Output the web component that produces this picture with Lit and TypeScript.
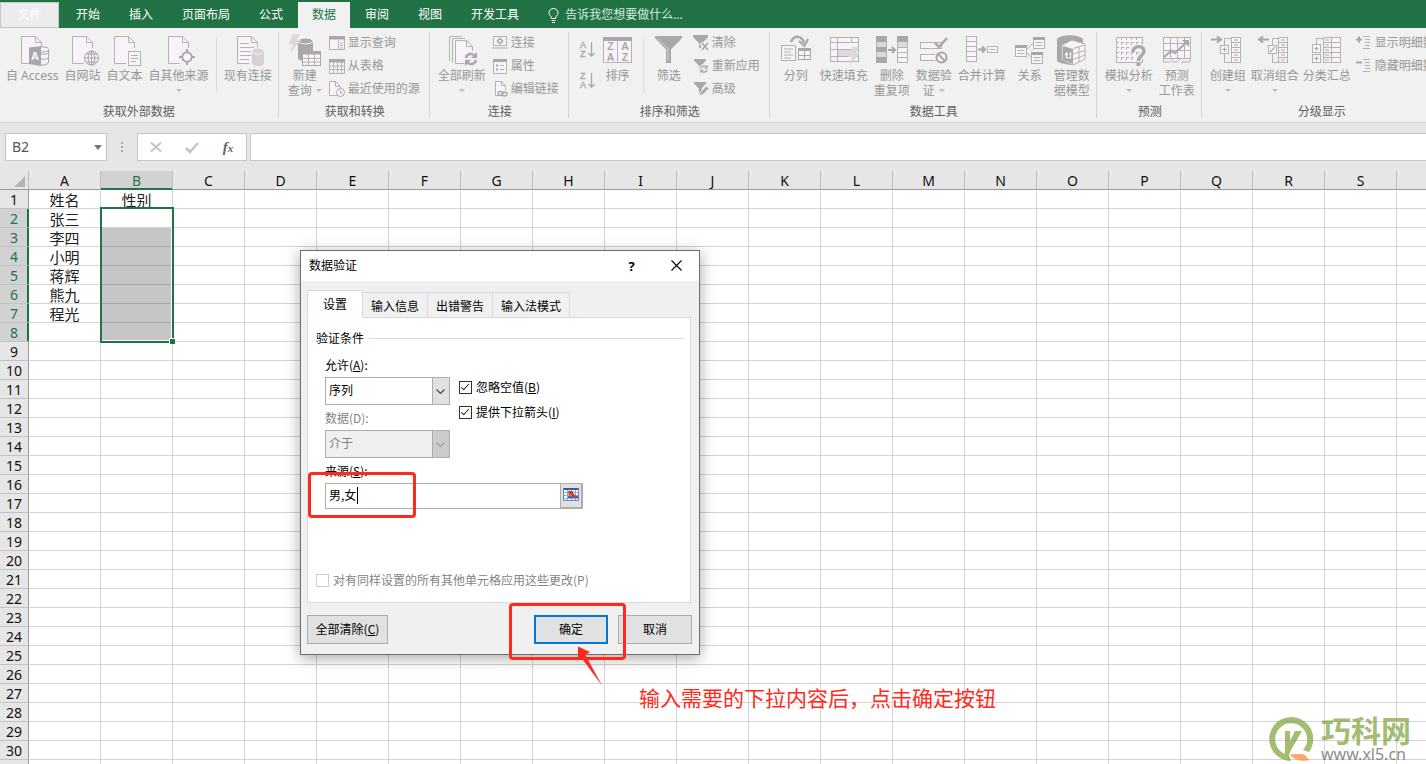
import { LitElement, html, svg, css, nothing, TemplateResult, SVGTemplateResult } from "lit";
import { customElement } from "lit/decorators.js";
import { classMap } from "lit/directives/class-map.js";

const UI_FONT = css`"Noto Sans CJK SC", sans-serif`;

/* ---------- ribbon glyphs ---------- */

const line = "#b5b1b5";
const dark = "#a9a7a9";
const pale = "#f7f3f8";
const mid = "#dcd8dc";

const doc = svg`<path d="M25.5 13V7.5L19.5 1.5H5.5V28.5H17" fill=${pale} stroke=${line}/><path d="M19.5 1.5V7.5H25.5" fill="none" stroke=${line}/>`;
const bolt = (x: number, y: number) =>
  svg`<path transform="translate(${x} ${y})" d="M4 0H11L8 6H12L1 19L4 10H0Z" fill=${mid}/>`;
const cylinder = (x: number, y: number, w: number, h: number, fill: string) =>
  svg`<path d="M${x} ${y + 3}V${y + h - 3}C${x} ${y + h + 1} ${x + w} ${y + h + 1} ${x + w} ${y + h - 3}V${y + 3}Z" fill=${fill}/>
  <ellipse cx=${x + w / 2} cy=${y + 3} rx=${w / 2} ry="3" fill=${fill} stroke=${pale}/>`;
const swirl = (x: number, y: number, s: number) =>
  svg`<g transform="translate(${x} ${y}) scale(${s})"><circle r="8" fill="#f1f1f1"/>
  <path d="M-5 -1A5 5 0 0 1 4 -3M5 1A5 5 0 0 1 -4 3" fill="none" stroke=${dark} stroke-width="2.4"/>
  <path d="M6 -7V-1H0ZM-6 7V1H0Z" fill=${dark}/></g>`;
const plusBox = (x: number, y: number, slash = false) =>
  svg`<rect x=${x} y=${y} width="8" height="8" fill=${pale} stroke=${line}/>
  <path d=${slash ? `M${x + 1.5} ${y + 6.5}l5 -5` : `M${x + 2} ${y + 4}h4M${x + 4} ${y + 2}v4`} stroke=${dark} stroke-width="1.2"/>`;
const miniCard = (x: number, y: number) =>
  svg`<rect x=${x} y=${y} width="11" height="11" fill=${pale} stroke=${line}/><path d="M${x - 0.5} ${y + 1}h12" stroke=${dark} stroke-width="3"/>
  <path d="M${x + 2} ${y + 5}h7M${x + 2} ${y + 8}h7" stroke=${line}/>`;
const funnel = svg`<path d="M0 0H15V2L9.500 8V15L6 13V8L0 2Z" fill=${dark}/>`;
const outlineTable = svg`<rect x="19.500" y="2.500" width="9" height="25" fill=${pale} stroke=${line}/>
  <path d="M19.500 7.500h9M19.500 12.500h9M19.500 17.500h9M19.500 22.500h9" stroke=${line}/>
  <path d="M22 5h4M22 10h4M22 15h4M22 20h4M22 25h4" stroke=${dark}/>`;

const glyphs: Record<string, SVGTemplateResult> = {
  access: svg`${doc}${cylinder(19, 12, 13, 18, pale)}
    <path d="M20 14.500a6 2.500 0 0 0 12.500 0M22 13q5 -3 10 0M32.500 14V28q-3 3 -8 2M25 19q5 1 7 -1M25 24q5 1 7 -1" fill="none" stroke=${dark}/>
    <path d="M13 12.500L25 11V31L13 29Z" fill=${dark}/><text x="15" y="25" font-size="11" font-weight="bold" fill="#fff">A</text>`,
  web: svg`${doc}<circle cx="24.500" cy="23" r="7" fill=${pale} stroke=${dark}/><ellipse cx="24.500" cy="23" rx="3.300" ry="7" fill="none" stroke=${dark}/>
    <path d="M24.500 16V30M17.500 23H31.500M19 19H30M19 27H30" stroke=${dark}/>`,
  text: svg`${doc}<rect x="19.500" y="16.500" width="12" height="14" fill=${pale} stroke=${line}/><path d="M22 20.500h7M22 23.500h7M22 26.500h5" stroke=${line}/>`,
  other: svg`${doc}<circle cx="24" cy="22" r="8" fill="#f1f1f1"/><circle cx="24" cy="22" r="4.700" fill=${pale} stroke=${dark} stroke-width="2"/>
    <path d="M24 14v4M24 26v4M16 22h4M28 22h4" stroke=${dark} stroke-width="2"/>`,
  existing: svg`${doc}<path d="M8 8.500h9M8 12.500h14M8 16.500h11M8 20.500h11M8 24.500h9" stroke=${line}/>${cylinder(20, 13, 12, 18, "#d5d1d5")}`,
  newquery: svg`${cylinder(9, 3, 15, 23, dark)}${bolt(0, -1)}<rect x="13.500" y="16.500" width="18" height="14" fill=${pale} stroke=${dark}/>
    <path d="M13 18h19" stroke=${dark} stroke-width="3"/><path d="M19.500 19v11M25.500 19v11M14 23.500h18M14 27h18" stroke=${line}/>`,
  refresh: svg`<path d="M3.500 26V1.500H16M6.500 28V3.500H19" fill="none" stroke=${line}/><path d="M26.500 16V11.500L20.500 5.500H9.500V28.500H19" fill=${pale} stroke=${line}/>
    <path d="M20.500 5.500V11.500H26.500" fill="none" stroke=${line}/>${swirl(25, 24, 1)}`,
  sort: svg`<rect x="1.500" y="2.500" width="28" height="25" fill=${pale} stroke=${line}/><path d="M1 4h29" stroke=${dark} stroke-width="4"/><path d="M15.500 5v22" stroke=${line}/>
    <g font-size="10.500" font-weight="bold" fill=${dark} text-anchor="middle"><text x="8.500" y="15">Z</text><text x="8.500" y="25.500">A</text><text x="23" y="15">A</text><text x="23" y="25.500">Z</text></g>`,
  filter: svg`<path d="M2 1H29V3L18 14.500V28H13V14.500L2 3Z" fill=${dark}/><path d="M5 3.500L15 14V26" fill="none" stroke="#d8d4d8"/>`,
  columns: svg`<path d="M11 7C14 0 22 0 24 8" fill="none" stroke=${dark} stroke-width="2.500"/><path d="M19 6L24.500 11L28 4" fill="none" stroke=${dark} stroke-width="2.200"/>
    <rect x="1.500" y="10.500" width="14" height="15" fill=${pale} stroke=${line}/><path d="M4 14h9M4 17h7M4 20h9M4 23h7" stroke=${line}/>
    <rect x="18.500" y="13.500" width="12" height="11" fill=${pale} stroke=${dark}/><path d="M18 14.500h13" stroke=${dark} stroke-width="3"/><path d="M24.500 16v8M19 20.500h12" stroke=${dark}/>`,
  flash: svg`<rect x="2.500" y="2.500" width="28" height="24" fill=${pale} stroke=${line}/><path d="M2 7.500h28M2 14.500h28M2 21.500h28M9.500 2v24M23.500 2v5" stroke=${line}/>
    <rect x="10" y="15" width="14" height="6" fill=${mid}/>${bolt(20, 12)}`,
  dedupe: svg`<rect x=".5" y="1.500" width="10" height="26" fill=${mid} stroke=${line}/><rect y="1" width="11" height="6" fill=${dark}/><rect y="12" width="11" height="5" fill=${dark}/><rect y="22" width="11" height="6" fill=${dark}/>
    <path d="M12 15h6M16 12l3 3l-3 3" fill="none" stroke=${dark} stroke-width="2"/>
    <rect x="21.500" y="1.500" width="10" height="26" fill=${pale} stroke=${line}/><rect x="21" y="1" width="11" height="6" fill=${dark}/><rect x="22" y="7" width="9" height="5" fill=${mid}/><path d="M21 12.500h11M21 17.500h11M21 22.500h11" stroke=${line}/>`,
  validate: svg`<rect x="2.500" y="7.500" width="21" height="6" fill=${pale} stroke=${line}/><rect x="2.500" y="19.500" width="16" height="6" fill=${pale} stroke=${line}/>
    <path d="M17 8l4 4L29 3" fill="none" stroke=${dark} stroke-width="2.500"/><circle cx="23.500" cy="22.500" r="7" fill="#f1f1f1"/><circle cx="23.500" cy="22.500" r="5" fill=${pale} stroke=${dark} stroke-width="2"/><path d="M20 19l7 7" stroke=${dark} stroke-width="2"/>`,
  consolidate: svg`<rect x=".5" y="1.500" width="10" height="25" fill=${pale} stroke=${line}/><path d="M0 6.500h11M0 11.500h11M0 16.500h11M0 21.500h11" stroke=${line}/>
    <path d="M12 14.500h7M16 11.500l3 3l-3 3" fill="none" stroke=${dark} stroke-width="2"/><rect x="21.500" y="11.500" width="10" height="6" fill=${pale} stroke=${line}/><path d="M24 14.500h5" stroke=${line}/>`,
  relation: svg`<path d="M12 15L19 8M12 17L18 23" stroke=${line}/>${miniCard(1.5, 10.5)}${miniCard(19.5, 2.5)}${miniCard(17.5, 17.5)}`,
  model: svg`<path d="M1 4C5 -1 22 -1 27 4V9L16 10L15 30C8 29 3 28 1 26Z" fill=${dark}/><path d="M6 10L16 5L29 9V24L17 30L6 25Z" fill=${pale} stroke=${line}/>
    <path d="M7 11l10 3v15l-10 -4Z" fill=${dark}/><path d="M17 13.500L29 10M17 19L29 15.500M17 24.500L29 20M23 12v15" stroke=${line}/><path d="M10.500 23V19M9 20l1.500 -2l1.500 2M14.500 17v6h-2M10.500 23h2" fill="none" stroke="#fff" stroke-width="1.200"/>`,
  whatif: svg`<rect x="3.500" y="2.500" width="26" height="25" fill=${pale} stroke=${line}/><path d="M8.500 2v25M13.500 2v25M18.500 2v25M23.500 2v25M3 7.500h26M3 12.500h26M3 17.500h26M3 22.500h26" stroke=${line} stroke-dasharray="3 2"/>
    <path d="M20 17C20 10 31 10 31 16C31 21 25.500 20 25.500 26" fill="none" stroke="#f1f1f1" stroke-width="6"/><path d="M20 17C20 10 31 10 31 16C31 21 25.500 20 25.500 26" fill="none" stroke=${dark} stroke-width="3.400"/><rect x="23.500" y="28" width="4" height="3" fill=${dark}/>`,
  forecast: svg`<rect x="2.500" y="2.500" width="27" height="21" fill=${pale} stroke=${line}/><path d="M9.500 2v21M16.500 2v21M23.500 2v21M2 8.500h27M2 15.500h27" stroke=${line}/>
    <path d="M3 22L10 16L14 18L27 6" fill="none" stroke=${dark} stroke-width="2"/><path d="M21 5H28V12Z" fill=${dark}/><path d="M2.500 23v4h6l3 -3M11 27h5l3 -3M20 27h9v-3" fill="none" stroke=${line}/>`,
  group: svg`<path d="M-1 4.500h9M5 1.500l4 3l-4 3" fill="none" stroke=${dark} stroke-width="2"/><path d="M19 3.500H12.500V10M12.500 19V27.500H19" fill="none" stroke=${line}/>${plusBox(8.500, 10.500)}${outlineTable}`,
  ungroup: svg`<path d="M0 4.500h10M4 1.500l-4 3l4 3" fill="none" stroke=${dark} stroke-width="2"/><path d="M19 3.500H13.500V10M13.500 19V27.500H19" fill="none" stroke=${line}/>${plusBox(9.500, 10.500, true)}${outlineTable}`,
  subtotal: svg`<path d="M12 3.500H5.500V9" fill="none" stroke=${line}/>${plusBox(1.5, 9.500)}${plusBox(1.5, 19.500)}
    <rect x="12.500" y="2.500" width="17" height="25" fill=${pale} stroke=${line}/><path d="M12 7.500h18M12 12.500h18M12 17.500h18M12 22.500h18M20.500 2v25" stroke=${line}/><path d="M14 5h4M14 10h4M14 15h4M14 20h4M14 25h4" stroke=${dark}/>`,
  /* 16 px glyphs */
  show: svg`<rect x=".5" y="1.500" width="15" height="13" fill=${pale} stroke=${line}/><path d="M0 3h16" stroke=${dark} stroke-width="3"/><path d="M9.500 5v9M11 8h3M11 10.500h3M11 13h3" stroke=${line}/>`,
  table: svg`<rect x=".5" y="1.500" width="15" height="14" fill=${pale} stroke=${line}/><path d="M0 3h16" stroke=${dark} stroke-width="3"/><path d="M4.500 4v11M8.500 4v11M12.500 4v11M1 8h14M1 11.500h14" stroke=${line}/>`,
  recent: svg`<path d="M8 14.500H.5V.5H6.500L11.500 5.500V8" fill=${pale} stroke=${line}/><path d="M6.500 1V5.500H11" fill="none" stroke=${line}/><circle cx="11.500" cy="11.500" r="4" fill=${pale} stroke=${dark}/><path d="M11.500 9v3h2" fill="none" stroke=${dark}/>`,
  link: svg`<rect x="1.500" y="1.500" width="13" height="9" fill=${pale} stroke=${line}/><circle cx="8" cy="6" r="2" fill="none" stroke=${dark} stroke-width="1.400"/><path d="M8 2.500v2M8 7.500v2M4.500 6h2M9.500 6h2M0 13h16" stroke=${dark}/>`,
  props: svg`<rect x="1.500" y="1.500" width="13" height="14" fill=${pale} stroke=${line}/><path d="M1 2.500h14" stroke=${dark} stroke-width="3"/><path d="M4 7.500h2M4 11.500h2" stroke=${dark} stroke-width="2"/><path d="M8 7.500h4M8 11.500h4" stroke=${line}/>`,
  editlink: svg`<path d="M7 14.500H3.500V.5H9.500L13.500 4.500V9" fill=${pale} stroke=${line}/><path d="M9.500 1V4.500H13" fill="none" stroke=${line}/><ellipse cx="8.500" cy="12.500" rx="2.500" ry="2" fill="none" stroke=${dark} stroke-width="1.300"/><ellipse cx="12.500" cy="13" rx="2.500" ry="2" fill="none" stroke=${dark} stroke-width="1.300"/>`,
  clear: svg`${funnel}<path d="M8 8l7 7M15 8l-7 7" stroke="#f1f1f1" stroke-width="4"/><path d="M9 8l6 7M15 8l-6 7" stroke=${dark} stroke-width="1.600"/>`,
  reapply: svg`<g transform="translate(1 1) scale(.8)">${funnel}</g>${swirl(11, 11, 0.62)}`,
  advanced: svg`<g transform="translate(1 1) scale(.8)">${funnel}</g><path d="M6 15l1.500 -4l6 -6l2.500 2.500l-6 6Z" fill=${dark} stroke="#f1f1f1"/>`,
  detailplus: svg`<path d="M0 4.500h6M3 1.500v6" stroke=${dark} stroke-width="2"/><path d="M7 1.500h7M9 4.500h5M9 7.500h5M9 10.500h5M7 13.500h7" stroke=${line}/>`,
  detailminus: svg`<path d="M0 4.500h6" stroke=${dark} stroke-width="2"/><path d="M7 1.500h7M9 4.500h5M9 7.500h5M9 10.500h5M7 13.500h7" stroke=${line}/>`,
  az: svg`<g font-size="9" fill=${dark} stroke=${dark} stroke-width=".3"><text x="0" y="7">A</text><text x="0" y="16">Z</text></g><path d="M11.500 1v14M8.500 12l3 3l3 -3" fill="none" stroke=${dark} stroke-width="1.300"/>`,
  za: svg`<g font-size="9" fill=${dark} stroke=${dark} stroke-width=".3"><text x="0" y="7">Z</text><text x="0" y="16">A</text></g><path d="M11.500 1v14M8.500 12l3 3l3 -3" fill="none" stroke=${dark} stroke-width="1.300"/>`,
};

@customElement("ribbon-bar")
class RibbonBar extends LitElement {
  static styles = css`
    :host { display: block; flex: none; font: 12px/16px "Noto Sans", ${UI_FONT}; }
    .tabs { display: flex; align-items: stretch; gap: 1px; height: 26px; padding-top: 2px; background: #217346; color: #fff; overflow: hidden; }
    button { font: inherit; color: inherit; background: none; border: 0; padding: 0; margin: 0; white-space: nowrap; }
    .tab { padding: 0 14px; }
    .file { width: 59px; margin-right: 2px; background: #ececec; border: 1px solid #c8c8c8; color: #fff; }
    .tab.on { background: #f1f1f1; color: #217346; }
    .tell { display: flex; align-items: center; gap: 6px; padding: 0 14px; color: #d9e9df; }
    .tools { display: flex; height: 94px; overflow: hidden; background: #f1f1f1; border-bottom: 1px solid #d2d2d2; color: #979797; }
    .group { display: flex; flex-direction: column; flex: none; position: relative; padding: 3px 4px 0 3px; }
    .group + .group { padding-left: 5px; }
    .group::after { content: ""; position: absolute; right: 0; top: 4px; height: 86px; border-right: 1px solid #d4d4d4; }
    .items { display: flex; height: 73px; }
    .name { text-align: center; line-height: 16px; color: #606060; }
    .outline .name { padding-right: 16px; }
    .outline .big { padding: 4px 2px 0; }
    .big { display: flex; flex-direction: column; align-items: center; padding: 4px 3px 0; min-width: 42px; line-height: 15px; }
    .big svg { margin-bottom: 1px; overflow: visible; }
    .big .sub { display: flex; align-items: center; gap: 4px; height: 15px; }
    .caret { width: 0; border: 3px solid transparent; border-top-color: #bcbcbc; border-bottom: 0; }
    .col { display: flex; flex-direction: column; padding: 0 6px 0 3px; }
    .small { display: flex; align-items: center; gap: 3px; height: 23px; }
    .small svg { overflow: visible; }
    .sorts { display: flex; flex-direction: column; gap: 14px; padding: 10px 3px 0 6px; }
    .sorts svg { display: block; overflow: visible; }
    .rule { border-left: 1px solid #dcdcdc; margin: 7px 4px 11px; }
    svg text { font-family: "Liberation Sans", sans-serif; }
  `;

  big(icon: string, label: string, sub = "", drop = false): TemplateResult {
    return html`<button class="big">
      <svg width="32" height="32" viewBox="0 0 32 32">${glyphs[icon]}</svg>
      <span>${label}</span>
      ${sub || drop ? html`<span class="sub">${sub}${drop ? html`<i class="caret"></i>` : nothing}</span>` : nothing}
    </button>`;
  }
  small(icon: string, label: string): TemplateResult {
    return html`<button class="small"><svg width="16" height="16" viewBox="0 0 16 16">${glyphs[icon]}</svg>${label}</button>`;
  }
  group(name: string, items: TemplateResult, outline = false): TemplateResult {
    return html`<section class=${classMap({ group: true, outline })}><div class="items">${items}</div><div class="name">${name}</div></section>`;
  }

  render() {
    const tabs = ["开始", "插入", "页面布局", "公式", "数据", "审阅", "视图", "开发工具"];
    return html`
      <nav class="tabs">
        <button class="file">文件</button>
        ${tabs.map((t) => html`<button class=${classMap({ tab: true, on: t === "数据" })}>${t}</button>`)}
        <button class="tell">
          <svg width="11" height="15" viewBox="0 0 11 15" fill="none" stroke="#fff"><path d="M3.500 10.500C3.500 8 1 7.500 1 4.800A4.500 4.300 0 0 1 10 4.800C10 7.500 7.500 8 7.500 10.500ZM3.500 12.500H7.500M4 14.500H7"/></svg>告诉我您想要做什么...
        </button>
      </nav>
      <div class="tools">
        ${this.group("获取外部数据", html`${this.big("access", "自 Access")}${this.big("web", "自网站")}${this.big("text", "自文本")}${this.big("other", "自其他来源", "", true)}<div class="rule"></div>${this.big("existing", "现有连接")}`)}
        ${this.group("获取和转换", html`${this.big("newquery", "新建", "查询", true)}<div class="col">${this.small("show", "显示查询")}${this.small("table", "从表格")}${this.small("recent", "最近使用的源")}</div>`)}
        ${this.group("连接", html`${this.big("refresh", "全部刷新", "", true)}<div class="col">${this.small("link", "连接")}${this.small("props", "属性")}${this.small("editlink", "编辑链接")}</div>`)}
        ${this.group("排序和筛选", html`<div class="sorts">
            <button aria-label="升序"><svg width="14" height="17">${glyphs.az}</svg></button>
            <button aria-label="降序"><svg width="14" height="17">${glyphs.za}</svg></button>
          </div>${this.big("sort", "排序")}<div class="rule"></div>${this.big("filter", "筛选")}<div class="col">${this.small("clear", "清除")}${this.small("reapply", "重新应用")}${this.small("advanced", "高级")}</div>`)}
        ${this.group("数据工具", html`${this.big("columns", "分列")}${this.big("flash", "快速填充")}${this.big("dedupe", "删除", "重复项")}${this.big("validate", "数据验", "证", true)}${this.big("consolidate", "合并计算")}${this.big("relation", "关系")}${this.big("model", "管理数", "据模型")}`)}
        ${this.group("预测", html`${this.big("whatif", "模拟分析", "", true)}${this.big("forecast", "预测", "工作表")}`)}
        ${this.group("分级显示", html`${this.big("group", "创建组", "", true)}${this.big("ungroup", "取消组合", "", true)}${this.big("subtotal", "分类汇总")}<div class="col">${this.small("detailplus", "显示明细数据")}${this.small("detailminus", "隐藏明细数据")}</div>`, true)}
      </div>`;
  }
}

@customElement("formula-bar")
class FormulaBar extends LitElement {
  static styles = css`
    :host { display: flex; flex: none; align-items: flex-start; height: 38px; padding: 10px 0 0 5px; background: #e6e6e6; font: 14px "Noto Sans", sans-serif; }
    .cell { display: flex; align-items: center; box-sizing: border-box; width: 102px; height: 28px; padding: 0 4px 0 6px; background: #fff; border: 1px solid #c6c6c6; }
    input { border: 0; padding: 0 0 2px; min-width: 0; flex: 1; font: inherit; color: #555; background: #fff; outline: 0; }
    .arrow { border: 4px solid transparent; border-top: 5px solid #777; border-bottom: 0; }
    .dots { width: 30px; height: 28px; }
    .box { display: flex; align-items: center; justify-content: space-around; box-sizing: border-box; width: 110px; height: 28px; background: #fff; border: 1px solid #c6c6c6; }
    button { border: 0; background: none; padding: 0; height: 20px; width: 20px; }
    .fx { font: italic bold 15px/20px "Liberation Serif", serif; color: #666; }
    .fx small { font-size: 11px; }
    .formula { box-sizing: border-box; height: 28px; margin-left: 3px; border: 1px solid #c6c6c6; border-right: 0; }
  `;
  render() {
    return html`
      <div class="cell"><input aria-label="名称框" .value=${"B2"} /><i class="arrow"></i></div>
      <svg class="dots" viewBox="0 0 30 28"><path d="M14 9h2v2h-2zM14 13h2v2h-2zM14 17h2v2h-2z" fill="#aaa"/></svg>
      <div class="box">
        <button aria-label="取消"><svg width="20" height="20"><path d="M5 5.500l10 9M15 5.500l-10 9" stroke="#c4c4c4" stroke-width="2"/></svg></button>
        <button aria-label="输入"><svg width="20" height="20"><path d="M4 11l4 4l8 -9" fill="none" stroke="#c4c4c4" stroke-width="2.500"/></svg></button>
        <button class="fx" aria-label="插入函数">f<small>x</small></button>
      </div>
      <input class="formula" aria-label="编辑栏" />`;
  }
}

@customElement("sheet-grid")
class SheetGrid extends LitElement {
  static styles = css`
    :host { display: block; flex: 1; min-height: 0; position: relative; overflow: hidden; background: #fff; }
    table { table-layout: fixed; width: 1541px; border-collapse: separate; border-spacing: 0; font: 15px/16px ${UI_FONT}; color: #222; }
    .rows { width: 29px; }
    th, td { box-sizing: border-box; height: 19px; padding: 2px 0 0; text-align: center; border-right: 1px solid #d4d4d4; border-bottom: 1px solid #d4d4d4; }
    th { font: 14px/16px "Noto Sans", sans-serif; background: #e6e6e6; color: #111; }
    thead th { border-right-color: #bdbdbd; border-bottom-color: #9b9b9b; }
    tbody th { border-right-color: #9b9b9b; border-bottom-color: #c3c3c3; }
    th.on { background: #d2d2d2; color: #217346; }
    thead th.on { box-shadow: inset 0 -1px #217346; border-bottom-color: #217346; }
    tbody th.on { box-shadow: inset -1px 0 #217346; border-right-color: #217346; }
    td.fill { background: #c6c6c6; border-bottom-color: #a8a8a8; }
    .corner svg { display: block; margin-left: 14px; }
    .sel { position: absolute; left: 100px; top: 36px; box-sizing: border-box; width: 74px; height: 136px; border: 2px solid #217346; box-shadow: inset -1px -1px #fff; }
    .sel::after { content: ""; position: absolute; right: -3px; bottom: -3px; width: 5px; height: 5px; background: #217346; border: 1px solid #fff; border-right: 0; border-bottom: 0; }
  `;
  render() {
    const cols = [..."ABCDEFGHIJKLMNOPQRSTU"];
    const names = ["姓名", "张三", "李四", "小明", "蒋辉", "熊九", "程光"];
    return html`
      <table>
        <colgroup><col class="rows" />${cols.map(() => html`<col />`)}</colgroup>
        <thead><tr>
          <th class="corner"><svg width="11" height="11"><path d="M11 0V11H0Z" fill="#b4b4b4"/></svg></th>
          ${cols.map((c, i) => html`<th class=${classMap({ on: c === "B" })}>${i < 19 ? c : nothing}</th>`)}
        </tr></thead>
        <tbody>
          ${Array.from({ length: 31 }, (_, i) => html`<tr>
            <th class=${classMap({ on: i > 0 && i < 8 })}>${i < 30 ? i + 1 : nothing}</th>
            ${cols.map((c) => html`<td class=${classMap({ fill: c === "B" && i > 1 && i < 8 })}>${c === "A" ? names[i] ?? "" : c === "B" && i === 0 ? "性别" : ""}</td>`)}
          </tr>`)}
        </tbody>
      </table>
      <div class="sel"></div>`;
  }
}

@customElement("validation-dialog")
class ValidationDialog extends LitElement {
  static styles = css`
    :host { display: block; box-sizing: border-box; width: 400px; border: 1px solid #6e6e6e; background: #f0f0f0; box-shadow: 0 3px 14px rgba(0, 0, 0, .35); font: 12px/16px ${UI_FONT}; color: #000; }
    button, input, select { font: inherit; color: inherit; margin: 0; box-sizing: border-box; }
    .title { display: flex; align-items: center; height: 30px; padding-left: 8px; background: #fff; }
    .title span { flex: 1; padding-bottom: 2px; }
    .title button { width: 45px; height: 30px; padding: 0 0 1px; border: 0; background: none; font: bold 13px "Noto Sans", sans-serif; }
    .body { padding: 9px 7px 10px 6px; }
    .tabs { display: flex; align-items: flex-end; position: relative; }
    .tabs button { height: 26px; padding: 1px 8px 0; background: #f0f0f0; border: 1px solid #d9d9d9; border-left: 0; }
    .tabs .on { height: 28px; width: 56px; padding: 0 8px; background: #fff; border: 1px solid #d9d9d9; border-bottom-color: #fff; }
    .panel { margin: -1px 1px 0 0; padding: 10px 6px 14px 8px; background: #fff; border: 1px solid #d9d9d9; }
    .head { display: flex; align-items: center; gap: 5px; height: 20px; }
    .head::after { content: ""; flex: 1; border-top: 1px solid #d9d9d9; }
    .form { display: grid; grid-template-columns: 125px 1fr; column-gap: 9px; padding: 9px 0 0 9px; }
    .field { display: flex; flex-direction: column; gap: 5px; margin-bottom: 5px; }
    .field label { line-height: 15px; }
    .pick { position: relative; height: 28px; }
    select { appearance: none; width: 100%; height: 28px; padding: 0 3px 2px; border: 1px solid #adadad; border-radius: 0; background: #fff; opacity: 1; }
    .pick svg { position: absolute; right: 1px; top: 1px; background: #e1e1e1; border-left: 1px solid #adadad; pointer-events: none; }
    .off { color: #838383; }
    .off select { background: #f0f0f0; }
    .off svg { background: #ccc; }
    .checks { display: flex; flex-direction: column; gap: 9px; padding-top: 22px; }
    .check { display: flex; align-items: center; gap: 4px; height: 16px; }
    .check input { appearance: none; position: relative; width: 13px; height: 13px; border: 1px solid #333; background: #fff; }
    .check input:checked::after { content: ""; position: absolute; left: 3px; top: 0; width: 3px; height: 7px; border: solid #222; border-width: 0 1px 1px 0; transform: rotate(42deg); }
    .check input:disabled { border-color: #ccc; }
    .source { grid-column: 1 / 3; width: 258px; }
    .ref { display: flex; position: relative; height: 26px; border: 1px solid #adadad; box-sizing: border-box; }
    .ref input { flex: 1; min-width: 0; padding: 0 3px 2px; border: 0; outline: 0; }
    .ref button { width: 22px; padding: 0; border: 1px solid #adadad; border-width: 0 1px 1px 1px; background: #e1e1e1; line-height: 0; }
    .cursor { position: absolute; left: 31px; top: 3px; height: 17px; border-left: 1px solid #000; }
    .same { margin-top: 58px; }
    .foot { display: flex; gap: 10px; padding-top: 12px; }
    .foot button { height: 29px; width: 74px; padding: 0 0 1px; background: #e1e1e1; border: 1px solid #adadad; }
    .foot .reset { width: 81px; margin-right: auto; }
    .foot .ok { border: 2px solid #0078d7; }
  `;
  chevron(color: string) {
    return html`<svg width="16" height="26" viewBox="0 0 16 26"><path d="M3.500 11.500l4 4l4 -4" fill="none" stroke=${color} stroke-width="1.200"/></svg>`;
  }
  render() {
    return html`
      <div class="title"><span>数据验证</span><button aria-label="帮助">?</button>
        <button aria-label="关闭"><svg width="11" height="11"><path d="M.5 .5l10 10M10.500 .5l-10 10" stroke="#000" stroke-width="1.100"/></svg></button></div>
      <div class="body">
        <div class="tabs"><button class="on">设置</button><button>输入信息</button><button>出错警告</button><button>输入法模式</button></div>
        <div class="panel">
          <div class="head">验证条件</div>
          <div class="form">
            <div>
              <div class="field"><label for="allow">允许(<u>A</u>):</label><div class="pick"><select id="allow"><option>序列</option></select>${this.chevron("#444")}</div></div>
              <div class="field off"><label for="data">数据(D):</label><div class="pick"><select id="data" disabled><option>介于</option></select>${this.chevron("#a0a0a0")}</div></div>
            </div>
            <div class="checks">
              <label class="check"><input type="checkbox" checked /><span>忽略空值(<u>B</u>)</span></label>
              <label class="check"><input type="checkbox" checked /><span>提供下拉箭头(<u>I</u>)</span></label>
            </div>
            <div class="field source"><label for="source">来源(<u>S</u>):</label>
              <div class="ref"><input id="source" .value=${"男,女"} /><i class="cursor"></i>
                <button aria-label="选择区域"><svg width="16" height="18" viewBox="0 0 16 18"><rect x=".5" y="1.500" width="15" height="12" fill="#fff" stroke="#6a86bd"/><path d="M1 2h14" stroke="#35599e" stroke-width="2"/><path d="M1 5.500h14M1 8.500h14M1 11.500h14M4.500 3v10M8.500 3v10M12.500 3v10" stroke="#8ea7d6"/><rect x="5" y="9" width="10" height="2" fill="#4169b2"/><path d="M5 4H11L9.500 5.500L13 9L11 11L7.500 7.500L6 9Z" fill="#d3392b"/></svg></button>
              </div></div>
          </div>
          <label class="check off same"><input type="checkbox" disabled /><span>对有同样设置的所有其他单元格应用这些更改(P)</span></label>
        </div>
        <div class="foot"><button class="reset">全部清除(<u>C</u>)</button><button class="ok">确定</button><button>取消</button></div>
      </div>`;
  }
}

@customElement("app-root")
class AppRoot extends LitElement {
  static styles = css`
    :host { display: flex; flex-direction: column; position: relative; height: 100vh; overflow: hidden; background: #fff; }
    validation-dialog { position: absolute; left: 300px; top: 250px; }
    .mark { position: absolute; box-sizing: border-box; border: 3px solid #ff2a1c; border-radius: 4px; }
    .source { left: 308px; top: 472px; width: 108px; height: 46px; }
    .confirm { left: 509px; top: 603px; width: 117px; height: 57px; }
    .arrow { position: absolute; left: 576px; top: 645px; }
    .note { position: absolute; left: 639px; top: 682px; margin: 0; font: 21px/30px ${UI_FONT}; color: #ff2a1c; white-space: nowrap; }
    .brand { position: absolute; right: 15px; bottom: 0; display: flex; align-items: flex-end; gap: 8px; opacity: .75; }
    .brand svg { margin-bottom: 3px; }
    .words { display: flex; flex-direction: column; }
    .words b { font: bold 30px/30px ${UI_FONT}; color: #85a944; }
    .words span { font: 16px/20px "Noto Sans", sans-serif; color: #666; }
  `;
  render() {
    return html`
      <ribbon-bar></ribbon-bar>
      <formula-bar></formula-bar>
      <sheet-grid></sheet-grid>
      <validation-dialog role="dialog" aria-label="数据验证"></validation-dialog>
      <div class="mark source"></div>
      <div class="mark confirm"></div>
      <svg class="arrow" width="28" height="42" viewBox="0 0 28 42"><path d="M2 1.500L14 7L9.500 10L26 40.500L5.500 13L2 15Z" fill="#ff2a1c"/></svg>
      <p class="note">输入需要的下拉内容后，点击确定按钮</p>
      <div class="brand">
        <svg width="44" height="44" viewBox="0 0 44 44"><path d="M22 44A22 22 0 1 1 40 35L34 33A16 16 0 1 0 16 37V14H21V24L26 14H33L22 33L20 38Z" fill="#85a944"/>
          <path d="M21 37C26 38 32 36 36 38C38 39 38 42 41 43C32 45 24 43 21 37Z" fill="#ff8b3d"/></svg>
        <div class="words"><b>巧科网</b><span>www.xl5.cn</span></div>
      </div>`;
  }
}
